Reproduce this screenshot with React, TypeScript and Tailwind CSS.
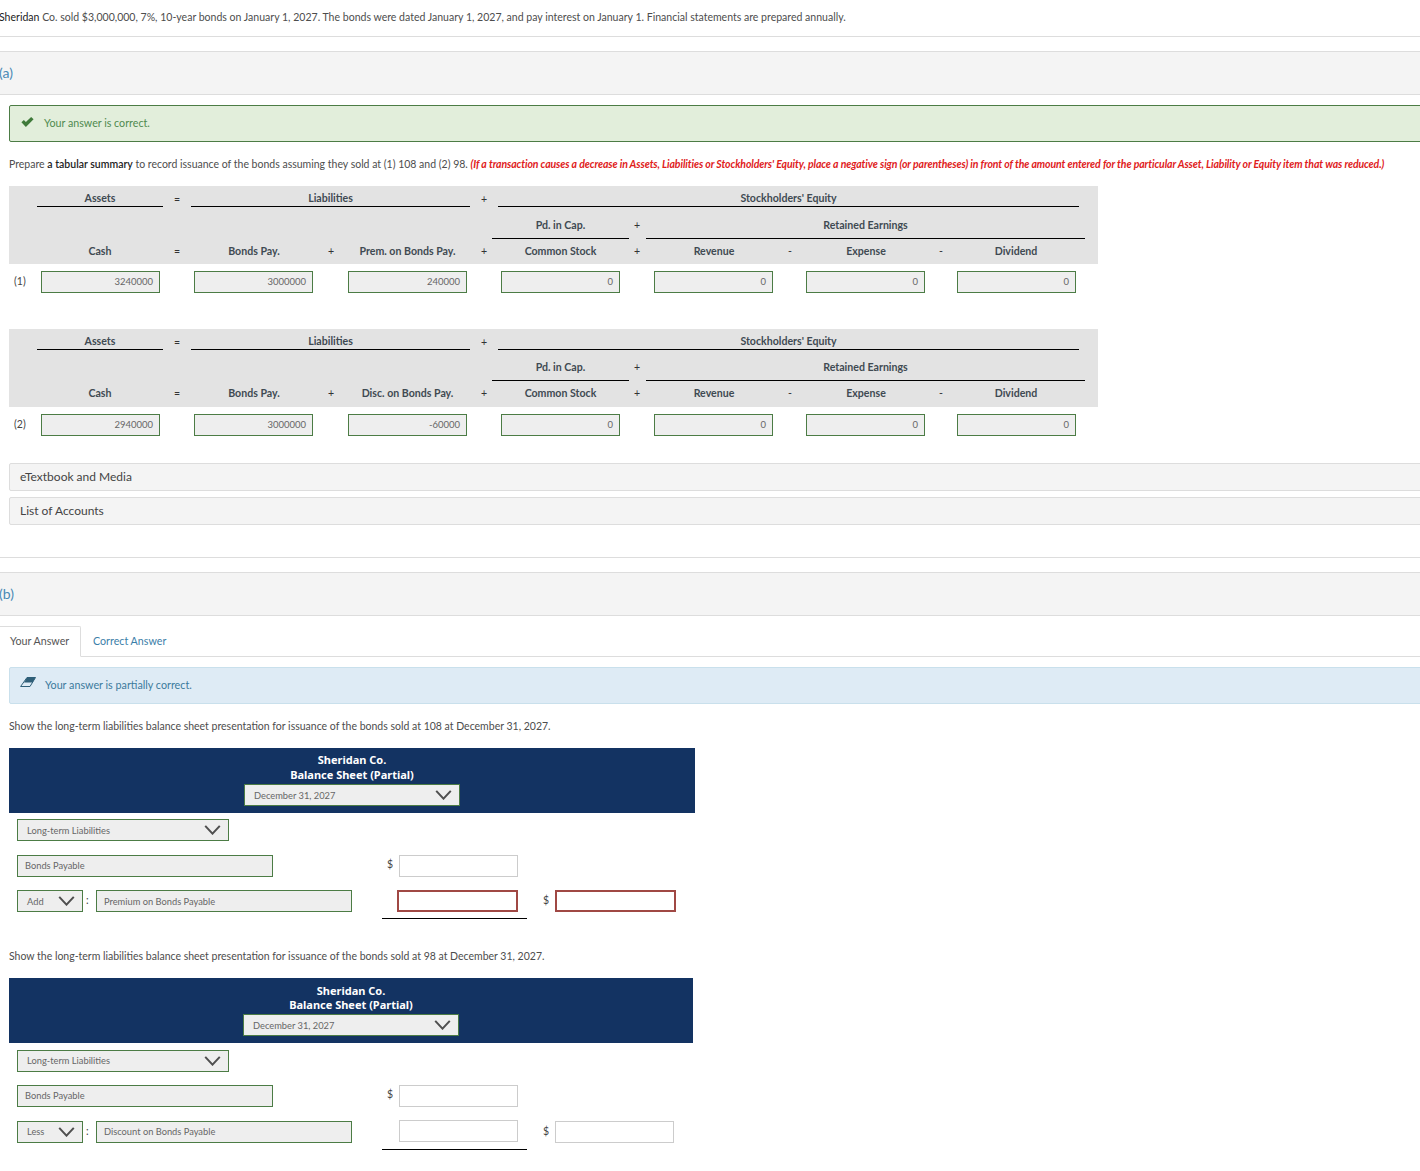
import React from 'react';

const GRID = 'grid grid-cols-[28px_126px_28px_126px_28px_125px_28px_125px_28px_126px_26px_126px_24px_126px_19px]';

interface HeaderProps {
  liabilityLabel: string;
  rowTwo: string;
  capPad: string;
}

// gray heading block above each row of inputs
const TableHeader: React.FC<HeaderProps> = ({ liabilityLabel, rowTwo, capPad }) => (
  <div className={`${GRID} w-[1089px] h-[78px] bg-[#e3e3e3] text-[10.6px] font-bold text-[#3f4a52] ${rowTwo}`}>
    <div className="col-start-2 row-start-1 border-b border-black text-center pt-[5px] leading-[14px]">Assets</div>
    <div className="col-start-3 row-start-1 text-center pt-[6px] leading-[14px] font-normal text-[#333]">=</div>
    <div className="col-start-4 col-span-3 row-start-1 border-b border-black text-center pt-[5px] leading-[14px]">Liabilities</div>
    <div className="col-start-7 row-start-1 text-center pt-[6px] leading-[14px] font-normal text-[#333]">+</div>
    <div className="col-start-8 col-span-7 row-start-1 border-b border-black text-center pt-[5px] leading-[14px]">Stockholders' Equity</div>

    <div className={`col-start-8 row-start-2 -mx-[6px] border-b border-black text-center ${capPad} leading-[14px]`}>Pd. in Cap.</div>
    <div className={`col-start-9 row-start-2 text-center ${capPad} leading-[14px] font-normal text-[#333]`}>+</div>
    <div className={`col-start-10 col-span-5 row-start-2 -ml-[5px] -mr-[6px] border-b border-black text-center ${capPad} leading-[14px]`}>Retained Earnings</div>

    <div className="col-start-2 row-start-3 text-center pt-[5px] leading-[14px]">Cash</div>
    <div className="col-start-3 row-start-3 text-center pt-[5px] leading-[14px] font-normal text-[#333]">=</div>
    <div className="col-start-4 row-start-3 text-center pt-[5px] leading-[14px]">Bonds Pay.</div>
    <div className="col-start-5 row-start-3 text-center pt-[5px] leading-[14px] font-normal text-[#333]">+</div>
    <div className="col-start-6 row-start-3 text-center pt-[5px] leading-[14px] whitespace-nowrap">{liabilityLabel}</div>
    <div className="col-start-7 row-start-3 text-center pt-[5px] leading-[14px] font-normal text-[#333]">+</div>
    <div className="col-start-8 row-start-3 text-center pt-[5px] leading-[14px]">Common Stock</div>
    <div className="col-start-9 row-start-3 text-center pt-[5px] leading-[14px] font-normal text-[#333]">+</div>
    <div className="col-start-10 row-start-3 text-center pt-[5px] leading-[14px]">Revenue</div>
    <div className="col-start-11 row-start-3 text-center pt-[5px] leading-[14px] font-normal text-[#333]">-</div>
    <div className="col-start-12 row-start-3 text-center pt-[5px] leading-[14px]">Expense</div>
    <div className="col-start-13 row-start-3 text-center pt-[5px] leading-[14px] font-normal text-[#333]">-</div>
    <div className="col-start-14 row-start-3 text-center pt-[5px] leading-[14px]">Dividend</div>
  </div>
);

const Cell = ({ value, inset }: { value: string; inset: string }) => (
  <div className={`${inset} w-[119px] h-[22px] border border-[#4c7c45] bg-[#eeeeee] text-right pr-[6px] text-[9.5px] leading-[20px] text-[#666]`}>
    {value}
  </div>
);

const ValueRow = ({ label, values }: { label: string; values: string[] }) => (
  <div className={`${GRID} w-[1089px] mt-[7px] h-[22px]`}>
    <div className="pl-[5px] text-[10.5px] leading-[20px] text-[#444]">{label}</div>
    <div className="col-start-2"><Cell value={values[0]} inset="ml-[4px]" /></div>
    <div className="col-start-4"><Cell value={values[1]} inset="ml-[3px]" /></div>
    <div className="col-start-6"><Cell value={values[2]} inset="ml-[3px]" /></div>
    <div className="col-start-8"><Cell value={values[3]} inset="ml-[3px]" /></div>
    <div className="col-start-10"><Cell value={values[4]} inset="ml-[3px]" /></div>
    <div className="col-start-12"><Cell value={values[5]} inset="ml-[3px]" /></div>
    <div className="col-start-14"><Cell value={values[6]} inset="ml-[4px]" /></div>
  </div>
);

const Chevron = () => (
  <svg viewBox="0 0 18 11" className="w-[17px] h-[10px]" fill="none" stroke="#4f4f4f" strokeWidth="2.2">
    <polyline points="1,1 9,9.5 17,1" />
  </svg>
);

const Select = ({ text, width, nudge = '' }: { text: string; width: string; nudge?: string }) => (
  <div className={`${width} h-[22px] shrink-0 flex items-center justify-between border border-[#4c7c45] bg-[#eeeeee] pl-[9px] pr-[7px] text-[9.3px] text-[#666]`}>
    <span className={nudge}>{text}</span>
    <Chevron />
  </div>
);

const Field = ({ text, width, nudge = '' }: { text: string; width: string; nudge?: string }) => (
  <div className={`${width} h-[22px] shrink-0 border border-[#4c7c45] bg-[#eeeeee] pl-[7px] text-[9.3px] leading-[20px] text-[#666]`}>
    <span className={nudge}>{text}</span>
  </div>
);

const Blank = ({ width, bad, lift = '' }: { width: string; bad?: boolean; lift?: string }) => (
  <div className={`${width} ${lift} h-[22px] shrink-0 bg-white ${bad ? 'border-2 border-[#a04844]' : 'border border-[#cccccc]'}`} />
);

interface SheetProps {
  intro: string;
  navyWidth: string;
  navyPad: string;
  navyLeading: string;
  dateGap: string;
  topGap: string;
  bondsGap: string;
  offset: string;
  adjust: string;
  badInputs?: boolean;
  blankRight: string;
  nudge?: string;
  lift?: string;
}

const BalanceSheet: React.FC<SheetProps> = ({ intro, navyWidth, navyPad, navyLeading, dateGap, topGap, bondsGap, adjust, badInputs, blankRight, offset, nudge, lift }) => (
  <div>
    <p className="ml-[9px] text-[10.5px] leading-[14px] text-[#4d4d4d]">{intro}</p>
    <div className={`${navyWidth} ${navyPad} ${navyLeading} ml-[9px] mt-[15px] h-[65px] bg-[#133362] flex flex-col items-center [font-family:'Noto_Sans',sans-serif] font-bold text-[11px] text-white`}>
      <div>Sheridan Co.</div>
      <div>Balance Sheet (Partial)</div>
      <div className={`${dateGap} [font-family:Lato,sans-serif] font-normal`}>
        <Select text="December 31, 2027" width="w-[216px]" nudge={lift ? 'relative top-px' : ''} />
      </div>
    </div>
    <div className={`ml-[17px] ${topGap}`}>
      <Select text="Long-term Liabilities" width="w-[212px]" nudge={nudge} />
    </div>
    <div className={`ml-[17px] ${bondsGap} flex items-start`}>
      <Field text="Bonds Payable" width="w-[256px]" />
      <span className="ml-[114px] w-[12px] text-[10.5px] leading-[18px] text-[#444]">$</span>
      <Blank width="w-[119px]" />
    </div>
    <div className={`ml-[17px] ${offset} flex items-start`}>
      <Select text={adjust} width="w-[66px]" nudge={nudge} />
      <span className="w-[13px] pl-[3px] text-[10.5px] leading-[20px] text-[#444]">:</span>
      <Field text={adjust === 'Add' ? 'Premium on Bonds Payable' : 'Discount on Bonds Payable'} width="w-[256px]" nudge={nudge} />
      <div className="ml-[30px] w-[145px] h-[29px] border-b border-black flex justify-end pr-[9px] shrink-0">
        <Blank width={badInputs ? 'w-[121px]' : 'w-[119px]'} bad={badInputs} lift={lift} />
      </div>
      <span className="ml-[16px] w-[12px] text-[10.5px] leading-[20px] text-[#444]">$</span>
      <Blank width={blankRight} bad={badInputs} />
    </div>
  </div>
);

export default function App() {
  return (
    <div className="relative w-[1420px] h-[1171px] overflow-hidden bg-white [font-family:Lato,sans-serif]">
      <p className="-ml-px pt-[10px] text-[10.54px] leading-[14px] text-[#4d4d4d]">
        <span className="text-[#222]">Sheridan</span> Co. sold $3,000,000, 7%, 10-year bonds on January 1, 2027. The bonds were dated January 1, 2027, and pay interest on January 1. Financial statements are prepared annually.
      </p>
      <div className="mt-[12px] border-t border-[#dddddd]" />

      <div className="mt-[14px] h-[44px] border-y border-[#dddddd] bg-[#f4f4f4] -ml-px text-[14px] leading-[42px] text-[#4a8ab5]">(a)</div>

      <div className="ml-[9px] mt-[10px] w-[1420px] h-[37px] rounded-l-[2px] border border-[#4c7c45] bg-[#e2eedb] flex items-center">
        <svg viewBox="0 0 14 11" className="ml-[11px] -mt-[4px] w-[13px] h-[10px]" fill="#3f7a3a">
          <path d="M0.3 5.8 L3 3.2 L5.2 5.4 L11 0 L13.7 2.6 L5.2 11 Z" />
        </svg>
        <span className="ml-[10px] text-[10.7px] text-[#4f8a4f]">Your answer is correct.</span>
      </div>

      <p className="ml-[9px] mt-[15px] text-[10.5px] leading-[14px] text-[#4d4d4d] whitespace-nowrap">
        Prepare <span className="font-semibold text-[#222]">a tabular summary</span> to record issuance of the bonds assuming they sold at (1) 108 and (2) 98.{' '}
        <span className="font-bold italic text-[#e0201b] tracking-[-0.1px]">(If a transaction causes a decrease in Assets, Liabilities or Stockholders' Equity, place a negative sign (or parentheses) in front of the amount entered for the particular Asset, Liability or Equity item that was reduced.)</span>
      </p>

      <div className="ml-[9px] mt-[15px]">
        <TableHeader liabilityLabel="Prem. on Bonds Pay." rowTwo="grid-rows-[21px_32px_25px]" capPad="pt-[11px]" />
        <ValueRow label="(1)" values={['3240000', '3000000', '240000', '0', '0', '0', '0']} />
      </div>

      <div className="ml-[9px] mt-[36px]">
        <TableHeader liabilityLabel="Disc. on Bonds Pay." rowTwo="grid-rows-[21px_31px_26px]" capPad="pt-[10px]" />
        <ValueRow label="(2)" values={['2940000', '3000000', '-60000', '0', '0', '0', '0']} />
      </div>

      <div className="ml-[9px] mt-[27px] w-[1420px] h-[28px] rounded-l-[2px] border border-[#dddddd] bg-[#f4f4f4] pl-[10px] text-[12px] leading-[26px] text-[#444]">eTextbook and Media</div>
      <div className="ml-[9px] mt-[6px] w-[1420px] h-[28px] rounded-l-[2px] border border-[#dddddd] bg-[#f4f4f4] pl-[10px] text-[12px] leading-[26px] text-[#444]">List of Accounts</div>

      <div className="mt-[32px] border-t border-[#dddddd]" />

      <div className="mt-[14px] h-[44px] border-y border-[#dddddd] bg-[#f4f4f4] -ml-px text-[14px] leading-[42px] text-[#4a8ab5]">(b)</div>

      <div className="mt-[10px] h-[31px] flex border-b border-[#dddddd] text-[10.7px]">
        <div className="w-[81px] h-[31px] border border-b-white border-l-0 border-[#dddddd] rounded-tr-[2px] pl-[10px] leading-[27px] text-[#555]">Your Answer</div>
        <div className="pl-[12px] leading-[29px] text-[#3b7ea8]">Correct Answer</div>
      </div>

      <div className="ml-[9px] mt-[10px] w-[1420px] h-[37px] rounded-l-[2px] border border-[#c9e0ec] bg-[#deebf5] flex items-center">
        <svg viewBox="0 0 16 10" className="ml-[10px] -mt-[7px] w-[16px] h-[10px]" fill="none">
          <path d="M7 0.5 L15.5 0.5 L10 9.5 L0.6 9.5 Z" stroke="#2f5f78" strokeWidth="1" />
          <path d="M7 0.5 L15.5 0.5 L12.6 5.5 L4 5.5 Z" fill="#2f5f78" />
        </svg>
        <span className="ml-[9px] text-[10.75px] text-[#3b7a9c]">Your answer is partially correct.</span>
      </div>

      <div className="mt-[15px]">
        <BalanceSheet
          intro="Show the long-term liabilities balance sheet presentation for issuance of the bonds sold at 108 at December 31, 2027."
          navyWidth="w-[686px]"
          navyPad="pt-[4px]"
          navyLeading="leading-[15px]"
          dateGap="mt-[2px]"
          topGap="mt-[6px]"
          bondsGap="mt-[14px]"
          offset="mt-[13px]"
          adjust="Add"
          badInputs
          blankRight="w-[121px]"
          nudge="relative top-px"
        />
      </div>

      <div className="mt-[30px]">
        <BalanceSheet
          intro="Show the long-term liabilities balance sheet presentation for issuance of the bonds sold at 98 at December 31, 2027."
          navyWidth="w-[684px]"
          navyPad="pt-[6px]"
          navyLeading="leading-[14px]"
          dateGap="mt-[2px]"
          topGap="mt-[7px]"
          bondsGap="mt-[13px]"
          offset="mt-[14px]"
          adjust="Less"
          blankRight="w-[119px]"
          lift="-mt-px"
        />
      </div>
    </div>
  );
}
